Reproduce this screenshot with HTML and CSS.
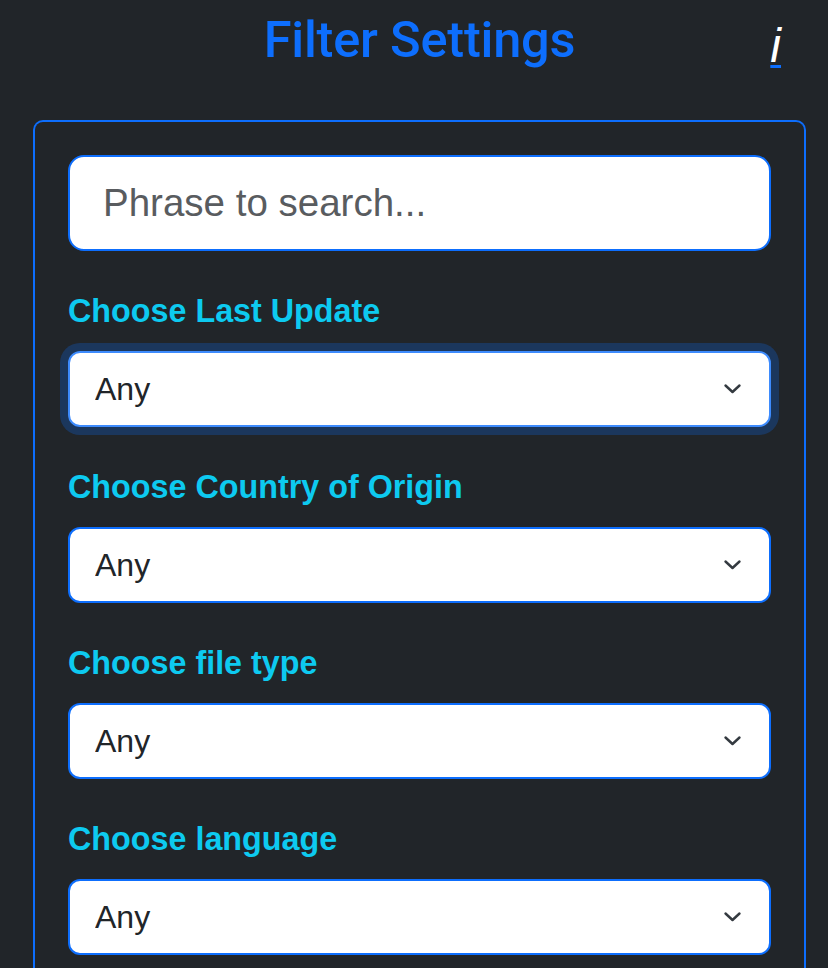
FILE: index.html
```html
<!DOCTYPE html>
<html lang="en">
<head>
<meta charset="utf-8">
<title>Filter Settings</title>
<link rel="stylesheet" href="styles.css">
</head>
<body>
<div class="page">
  <header class="header">
    <div class="side"></div>
    <h1 class="title">Filter Settings</h1>
    <div class="side side-right"><a class="info" href="#">i</a></div>
  </header>
  <form class="card">
    <input class="search" type="text" placeholder="Phrase to search...">

    <label class="label" for="upd">Choose Last Update</label>
    <div class="select-wrap focused">
      <select id="upd" class="select"><option>Any</option></select>
      <svg class="chev" width="19" height="12" viewBox="0 0 19 12"><polyline points="2.5,2.5 9.5,9 16.5,2.5" fill="none" stroke="#343a40" stroke-width="2.4" stroke-linecap="round" stroke-linejoin="round"/></svg>
    </div>

    <label class="label" for="cty">Choose Country of Origin</label>
    <div class="select-wrap">
      <select id="cty" class="select"><option>Any</option></select>
      <svg class="chev" width="19" height="12" viewBox="0 0 19 12"><polyline points="2.5,2.5 9.5,9 16.5,2.5" fill="none" stroke="#343a40" stroke-width="2.4" stroke-linecap="round" stroke-linejoin="round"/></svg>
    </div>

    <label class="label" for="ft">Choose file type</label>
    <div class="select-wrap">
      <select id="ft" class="select"><option>Any</option></select>
      <svg class="chev" width="19" height="12" viewBox="0 0 19 12"><polyline points="2.5,2.5 9.5,9 16.5,2.5" fill="none" stroke="#343a40" stroke-width="2.4" stroke-linecap="round" stroke-linejoin="round"/></svg>
    </div>

    <label class="label" for="lng">Choose language</label>
    <div class="select-wrap">
      <select id="lng" class="select"><option>Any</option></select>
      <svg class="chev" width="19" height="12" viewBox="0 0 19 12"><polyline points="2.5,2.5 9.5,9 16.5,2.5" fill="none" stroke="#343a40" stroke-width="2.4" stroke-linecap="round" stroke-linejoin="round"/></svg>
    </div>
  </form>
</div>
</body>
</html>
```

FILE: styles.css
```css
html, body {
  margin: 0;
  padding: 0;
  background: #212529;
  height: 100%;
  overflow: hidden;
}

body {
  font-family: "Liberation Sans", Arial, sans-serif;
  color: #dee2e6;
}

.page {
  padding: 0 22px 0 33px;
}

.header {
  display: grid;
  grid-template-columns: 1fr auto 1fr;
  align-items: start;
  height: 120px;
}

.title {
  margin: 12px 0 0 0;
  font-family: Roboto, "Liberation Sans", sans-serif;
  font-weight: 500;
  font-size: 50.5px;
  line-height: 56px;
  color: #0d6efd;
  letter-spacing: -0.2px;
}

.side-right {
  display: flex;
  justify-content: flex-end;
  padding-right: 25px;
}

.info {
  margin-top: 22px;
  font-family: "Liberation Sans", Arial, sans-serif;
  font-style: italic;
  font-size: 48px;
  line-height: 48px;
  color: #ffffff;
  text-decoration: underline;
  text-decoration-color: #0d6efd;
  text-decoration-thickness: 3px;
  text-underline-offset: 3px;
}

.card {
  display: flex;
  flex-direction: column;
  border: 2px solid #0d6efd;
  border-bottom: none;
  border-radius: 10px 10px 0 0;
  padding: 33px 33px 0 33px;
  min-height: 900px;
  box-sizing: border-box;
}

.search {
  display: block;
  box-sizing: border-box;
  width: 100%;
  height: 96px;
  margin: 0;
  padding: 0 33px;
  border: 2px solid #0d6efd;
  border-radius: 16px;
  background: #ffffff;
  font-family: "Liberation Sans", Arial, sans-serif;
  font-size: 38.5px;
  color: #212529;
  outline: none;
}

.search::placeholder {
  color: #595c5f;
  opacity: 1;
}

.label {
  display: block;
  margin-top: 41px;
  font-family: "Liberation Sans", Arial, sans-serif;
  font-weight: 700;
  font-size: 32.3px;
  line-height: 38px;
  color: #0dcaf0;
}

.select-wrap {
  position: relative;
  margin-top: 21px;
  border-radius: 12px;
}

.select-wrap.focused {
  box-shadow: 0 0 0 8px rgba(13, 110, 253, 0.25);
}

.select {
  display: block;
  box-sizing: border-box;
  width: 100%;
  height: 76px;
  margin: 0;
  padding: 0 60px 0 25px;
  border: 2px solid #0d6efd;
  border-radius: 12px;
  background: #ffffff;
  -webkit-appearance: none;
  appearance: none;
  font-family: "Liberation Sans", Arial, sans-serif;
  font-size: 32px;
  color: #212529;
  outline: none;
}

.focused .select {
  border-color: #3d8bfd;
}

.chev {
  position: absolute;
  right: 29px;
  top: 32px;
  pointer-events: none;
}
```
